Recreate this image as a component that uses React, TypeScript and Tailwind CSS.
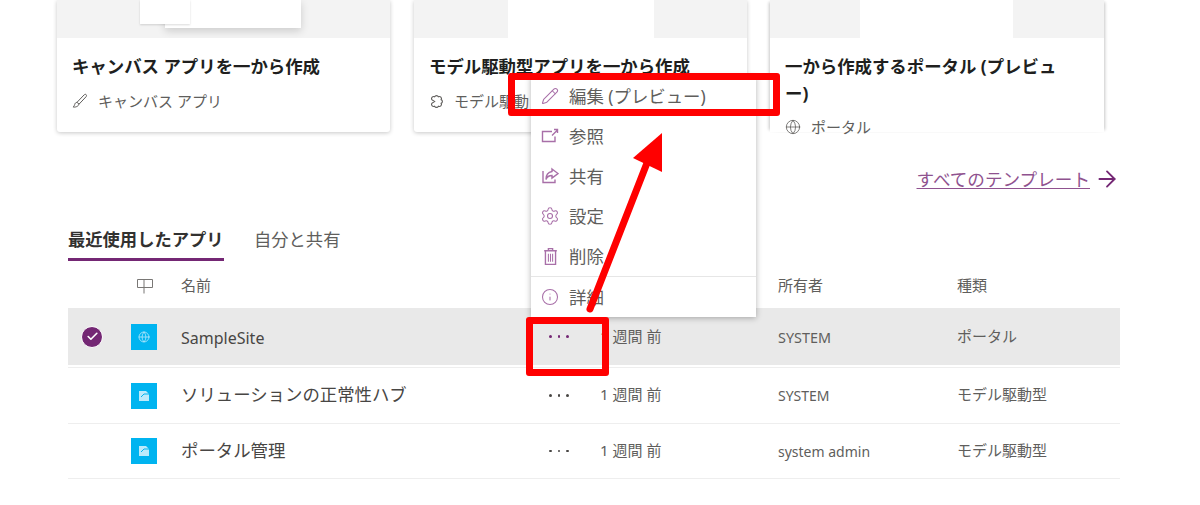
import { ArrowRight, Check, Globe, Info, Pencil, Settings } from 'lucide-react'

const font = "font-['Noto_Sans','Noto_Sans_CJK_JP',sans-serif]"

function Dots({ color }: { color: string }) {
  return (
    <div className="flex items-center gap-[6px] pl-[2px]">
      <span className={`h-[2.5px] w-[2.5px] rounded-full ${color}`} />
      <span className={`h-[2.5px] w-[2.5px] rounded-full ${color}`} />
      <span className={`h-[2.5px] w-[2.5px] rounded-full ${color}`} />
    </div>
  )
}

function BrushIcon() {
  return (
    <svg viewBox="0 0 16 16" className="h-[16px] w-[16px]" fill="none" stroke="#605e5c" strokeWidth="1">
      <path d="M14 1.500c.8.6.6 1.600 0 2.300L7 11.200 5 9.300 12 2c.6-.6 1.400-.9 2-.5z" />
      <path d="M5 9.300c-1.400.2-2 1-2.300 2.200-.2.9-.7 1.600-1.400 2.600 1.500.2 3.300-.3 4.300-1 1-.8 1.500-1.500 1.400-2.900" />
    </svg>
  )
}

function PuzzleIcon() {
  return (
    <svg viewBox="0 0 16 16" className="h-[15px] w-[15px]" fill="none" stroke="#605e5c" strokeWidth="1.200">
      <path d="M6 3A2.200 2.200 0 0 1 10 3A2.200 2.200 0 0 1 13 6A2.200 2.200 0 0 1 13 10A2.200 2.200 0 0 1 10 13A2.200 2.200 0 0 1 6 13A2.200 2.200 0 0 1 3 10L6 8 3 6A2.200 2.200 0 0 1 6 3z" />
    </svg>
  )
}

function OpenIcon() {
  return (
    <svg viewBox="0 0 18 18" className="h-[18px] w-[18px]" fill="none" stroke="#a86fa8" strokeWidth="1.400">
      <path d="M11 4.500H1.500v10h12.500V9.500" />
      <path d="M11 8.500 16 3.500M13 2.500h3.500V6" />
    </svg>
  )
}

function ShareIcon() {
  return (
    <svg viewBox="0 0 18 18" className="h-[18px] w-[18px]" fill="none" stroke="#a86fa8" strokeWidth="1.400">
      <path d="M2 4v11.500h12v-3" />
      <path d="M11 2 17 6.500 11 11V8.500C8 8.500 6 9.500 5 12.500 5 8 7.500 5 11 4.500z" />
    </svg>
  )
}

function TrashIcon() {
  return (
    <svg viewBox="0 0 18 18" className="h-[19px] w-[19px] shrink-0" fill="none" stroke="#a86fa8" strokeWidth="1.300">
      <path d="M3 3.500h12M7 3.500V1.500h4v2M4.200 3.500v13h9.600v-13" />
      <path d="M7 6.500v7.500M9 6.500v7.500M11 6.500v7.500" strokeWidth="1" />
    </svg>
  )
}

function ColumnsIcon() {
  return (
    <svg viewBox="0 0 16 16" className="h-[16px] w-[16px]" fill="none" stroke="#797775" strokeWidth="1">
      <path d="M.5 1.500h15M.5 1.500v8h15v-8M7 1.500V15.500" />
    </svg>
  )
}

function AppTile({ portal }: { portal?: boolean }) {
  return (
    <div className="flex h-[26px] w-[26px] items-center justify-center bg-[#00b4f0]">
      {portal ? (
        <Globe className="h-[12px] w-[12px] text-[#bfe9fb]" strokeWidth={1.500} />
      ) : (
        <svg viewBox="0 0 12 12" className="h-[12px] w-[12px]">
          <path d="M1 1h6.500L11 1v10H1z" fill="#bdeafb" />
          <path d="M3 7l3-3h5" fill="none" stroke="#00b4f0" strokeWidth="1" />
          <path d="M8 1l3 0v3z" fill="#00b4f0" />
        </svg>
      )}
    </div>
  )
}

const cols = 'grid grid-cols-[63px_50px_366px_53px_178px_179px_1fr] items-center'

const rows = [
  { name: 'ソリューションの正常性ハブ', owner: 'SYSTEM', type: 'モデル駆動型' },
  { name: 'ポータル管理', owner: 'system admin', type: 'モデル駆動型' },
]

const iconCls = 'h-[18px] w-[18px] shrink-0 text-[#a86fa8]'

const menuItems = [
  { label: '編集 (プレビュー)', icon: <Pencil className={iconCls} strokeWidth={1.400} /> },
  { label: '参照', icon: <OpenIcon /> },
  { label: '共有', icon: <ShareIcon /> },
  { label: '設定', icon: <Settings className="h-[20px] w-[20px] shrink-0 text-[#a86fa8]" strokeWidth={1.300} /> },
  { label: '削除', icon: <TrashIcon /> },
]

export default function App() {
  return (
    <div className={`relative h-[505px] w-[1200px] overflow-hidden bg-white ${font}`}>
      {/* template cards */}
      <div className="flex h-[132px] pl-[57px]">
        <div className="h-[132px] w-[333px] rounded-b-[3px] bg-white shadow-[0_1px_4px_rgba(0,0,0,0.22)]">
          <div className="relative h-[38px] overflow-hidden bg-[#f3f3f3]">
            <div className="absolute left-[108px] top-0 h-[28px] w-[136px] bg-white shadow-[0_3px_8px_rgba(0,0,0,0.16)]" />
            <div className="absolute left-[83px] top-0 h-[24px] w-[50px] bg-white shadow-[0_1px_2px_rgba(0,0,0,0.15)]" />
          </div>
          <div className="pl-[15px] pt-[15px]">
            <div className="text-[17.4px] font-bold leading-[27px] text-[#201f1e]">キャンバス アプリを一から作成</div>
            <div className="mt-[10px] flex h-[22px] items-center gap-[10px] text-[15px] text-[#605e5c]">
              <BrushIcon />
              <span>キャンバス アプリ</span>
            </div>
          </div>
        </div>
        <div className="ml-[24px] h-[132px] w-[333px] rounded-b-[3px] bg-white shadow-[0_1px_4px_rgba(0,0,0,0.22)]">
          <div className="relative h-[38px] overflow-hidden bg-[#f3f3f3]">
            <div className="absolute left-[94px] top-0 h-[38px] w-[146px] bg-white" />
          </div>
          <div className="pl-[15px] pt-[15px]">
            <div className="text-[17.4px] font-bold leading-[27px] text-[#201f1e]">モデル駆動型アプリを一から作成</div>
            <div className="mt-[10px] flex h-[22px] items-center gap-[10px] text-[15px] text-[#605e5c]">
              <PuzzleIcon />
              <span>モデル駆動</span>
            </div>
          </div>
        </div>
        <div className="ml-[23px] h-[132px] w-[334px] bg-white shadow-[3px_0_3px_-2px_rgba(0,0,0,0.22),-3px_0_3px_-2px_rgba(0,0,0,0.22)]">
          <div className="relative h-[38px] overflow-hidden bg-[#f3f3f3]">
            <div className="absolute left-[90px] top-0 h-[38px] w-[153px] bg-white" />
          </div>
          <div className="pl-[15px] pt-[15px]">
            <div className="whitespace-nowrap text-[17.4px] font-bold leading-[27px] text-[#201f1e]">
              一から作成するポータル (プレビュ
              <br />
              ー)
            </div>
            <div className="mt-[9px] flex h-[22px] items-center gap-[10px] text-[15px] text-[#605e5c]">
              <Globe className="h-[16px] w-[16px]" strokeWidth={1.200} />
              <span>ポータル</span>
            </div>
          </div>
        </div>
      </div>

      {/* all templates link */}
      <div className="mt-[34px] flex h-[26px] items-center justify-end pr-[80px] text-[#742774]">
        <span className="text-[17.6px] leading-[26px] underline underline-offset-2 opacity-80">すべてのテンプレート</span>
        <ArrowRight className="ml-[4px] h-[26px] w-[26px]" strokeWidth={1.700} />
      </div>

      {/* tabs */}
      <div className="ml-[68px] mt-[36px] flex h-[33px] text-[17.3px]">
        <div className="h-[33px] w-[156px] border-b-[3px] border-[#742774] font-semibold leading-[24px] text-[#323130]">最近使用したアプリ</div>
        <div className="ml-[30px] leading-[24px] text-[#605e5c]">自分と共有</div>
      </div>

      {/* app table */}
      <div className="ml-[68px] w-[1052px]">
        <div className={`${cols} h-[47px] pt-[2px] text-[15px] text-[#605e5c]`}>
          <div />
          <div className="pl-[6px]">
            <ColumnsIcon />
          </div>
          <div>名前</div>
          <div />
          <div />
          <div>所有者</div>
          <div>種類</div>
        </div>
        <div className={`${cols} h-[57px] bg-[#e9e9e9] text-[15px] text-[#605e5c]`}>
          <div className="pl-[13px]">
            <div className="flex h-[22px] w-[22px] items-center justify-center rounded-full border border-white bg-[#742774]">
              <Check className="h-[13px] w-[13px] text-white" strokeWidth={3} />
            </div>
          </div>
          <AppTile portal />
          <div className="pt-[3px] text-[16px] text-[#484644]">SampleSite</div>
          <Dots color="bg-[#742774]" />
          <div>1 週間 前</div>
          <div className="pt-[3px] text-[14.400px]">SYSTEM</div>
          <div>ポータル</div>
        </div>
        <div className="mt-[2px]">
          {rows.map((r) => (
            <div key={r.name} className={`${cols} h-[56px] border-t border-[#eeeeee] text-[15px] text-[#605e5c] last:border-b`}>
              <div />
              <AppTile />
              <div className="pb-[2px] text-[17.4px] text-[#484644]">{r.name}</div>
              <Dots color="bg-[#484644]" />
              <div className="pb-[2px]">1 週間 前</div>
              <div className="text-[14px]">{r.owner}</div>
              <div className="pb-[2px]">{r.type}</div>
            </div>
          ))}
        </div>
      </div>

      {/* context menu */}
      <div className="absolute left-[531px] top-[76px] w-[225px] bg-white text-[17.4px] text-[#605e5c] shadow-[0_1px_6px_rgba(0,0,0,0.3)]">
        {menuItems.map((m) => (
          <div key={m.label} className="flex h-[40px] items-center gap-[10px] pl-[10px]">
            <div className="flex w-[18px] justify-center">{m.icon}</div>
            <span>{m.label}</span>
          </div>
        ))}
        <div className="flex h-[41px] items-center gap-[10px] border-t border-[#e6e6e6] pl-[10px]">
          <Info className={iconCls} strokeWidth={1.400} />
          <span>詳細</span>
        </div>
      </div>

      {/* red annotations */}
      <div className="absolute left-[508px] top-[73px] h-[43px] w-[272px] rounded-[3px] border-[7px] border-[#ff0000]" />
      <div className="absolute left-[526px] top-[317px] h-[59px] w-[83px] rounded-[3px] border-[7px] border-[#ff0000]" />
      <svg className="absolute left-0 top-0" width="1200" height="505" fill="none">
        <path d="M590 309 647 163" stroke="#ff0000" strokeWidth="7" strokeLinecap="round" />
        <path d="M662 133 633 158 662 172z" fill="#ff0000" />
      </svg>
    </div>
  )
}
